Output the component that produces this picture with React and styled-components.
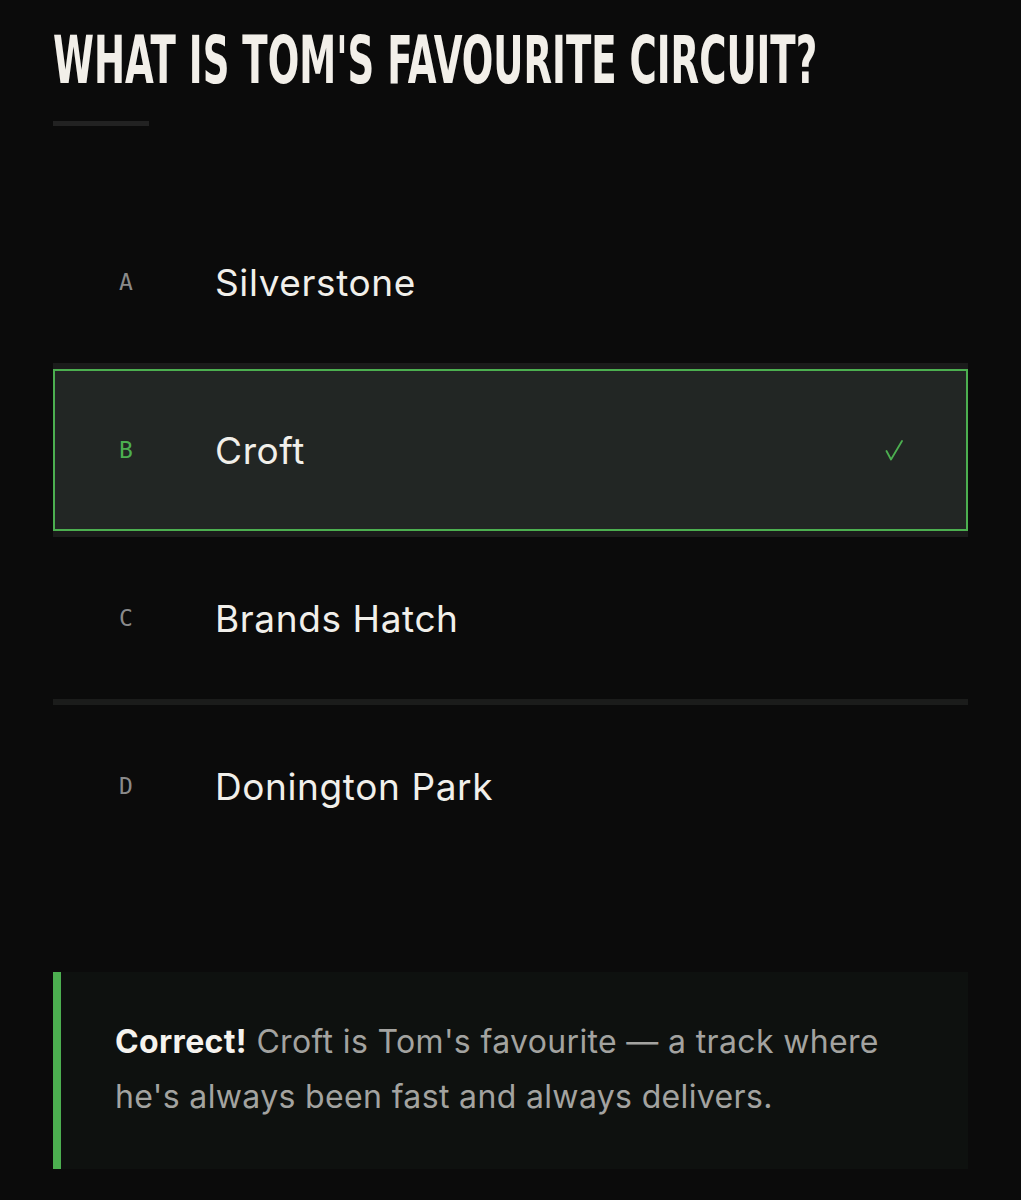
import React from 'react';
import styled, { createGlobalStyle } from 'styled-components';

const GREEN = '#4caf50';

const GlobalStyle = createGlobalStyle`
  html, body {
    margin: 0;
    background: #0b0b0b;
  }
  body {
    font-family: Inter, "Noto Sans", sans-serif;
    -webkit-font-smoothing: antialiased;
  }
`;

const Page = styled.div`
  padding: 29px 53px 40px;
  min-height: 1131px;
  background: #0b0b0b;
`;

const Title = styled.h1`
  margin: 0;
  font-family: "Liberation Sans Narrow", "DejaVu Sans Condensed", "Liberation Sans", sans-serif;
  font-weight: 700;
  font-size: 65px;
  line-height: 64px;
  color: #f2efe9;
  white-space: nowrap;
  transform: scaleX(0.635);
  transform-origin: left center;
`;

const TitleRule = styled.div`
  width: 96px;
  height: 5px;
  margin-top: 28px;
  background: #222222;
`;

const Options = styled.ul`
  list-style: none;
  margin: 75px 0 0;
  padding: 0;
`;

const Option = styled.li`
  display: grid;
  grid-template-columns: 96px 1fr auto;
  align-items: center;
  height: 162px;
  padding: 0 65px 0 66px;
  background: ${p => (p.$selected ? '#222624' : 'transparent')};
  box-shadow: ${p => (p.$selected ? `inset 0 0 0 2px ${GREEN}` : 'none')};
  border-bottom: 6px solid #1b1c1b;
  &:last-child {
    border-bottom: none;
  }
`;

const Letter = styled.span`
  font-family: "DejaVu Sans Mono", "Liberation Mono", monospace;
  font-size: 23px;
  color: ${p => (p.$selected ? GREEN : '#8a8a8a')};
`;

const Label = styled.span`
  font-size: 37px;
  font-weight: 400;
  color: #f1efea;
  letter-spacing: 0.6px;
`;

const Check = styled.svg`
  width: 18px;
  height: 21px;
  display: block;
`;

const Feedback = styled.div`
  margin-top: 105px;
  background: #0e110f;
  border-left: 8px solid ${GREEN};
  padding: 42px 56px 45px 54px;
  font-size: 32px;
  line-height: 55px;
  letter-spacing: 0.35px;
  color: #a3a3a0;
`;

const Strong = styled.strong`
  font-weight: 700;
  color: #f5f3ee;
`;

const answers = [
  { key: 'A', label: 'Silverstone' },
  { key: 'B', label: 'Croft', selected: true },
  { key: 'C', label: 'Brands Hatch' },
  { key: 'D', label: 'Donington Park' },
];

const CheckMark = () => (
  <Check viewBox="0 0 18 21" fill="none">
    <path d="M1.5 11 L6 19.5 L17 1" stroke={GREEN} strokeWidth="1.8" strokeLinecap="round" strokeLinejoin="round" />
  </Check>
);

export default function App() {
  return (
    <Page>
      <GlobalStyle />
      <Title>WHAT IS TOM'S FAVOURITE CIRCUIT?</Title>
      <TitleRule />
      <Options>
        { answers.map(a => (
          <Option key={ a.key } $selected={ a.selected }>
            <Letter $selected={ a.selected }>{ a.key }</Letter>
            <Label>{ a.label }</Label>
            { a.selected ? <CheckMark /> : <span /> }
          </Option>
        )) }
      </Options>
      <Feedback>
        <Strong>Correct!</Strong> Croft is Tom's favourite — a track where he's always been fast and always delivers.
      </Feedback>
    </Page>
  );
}
